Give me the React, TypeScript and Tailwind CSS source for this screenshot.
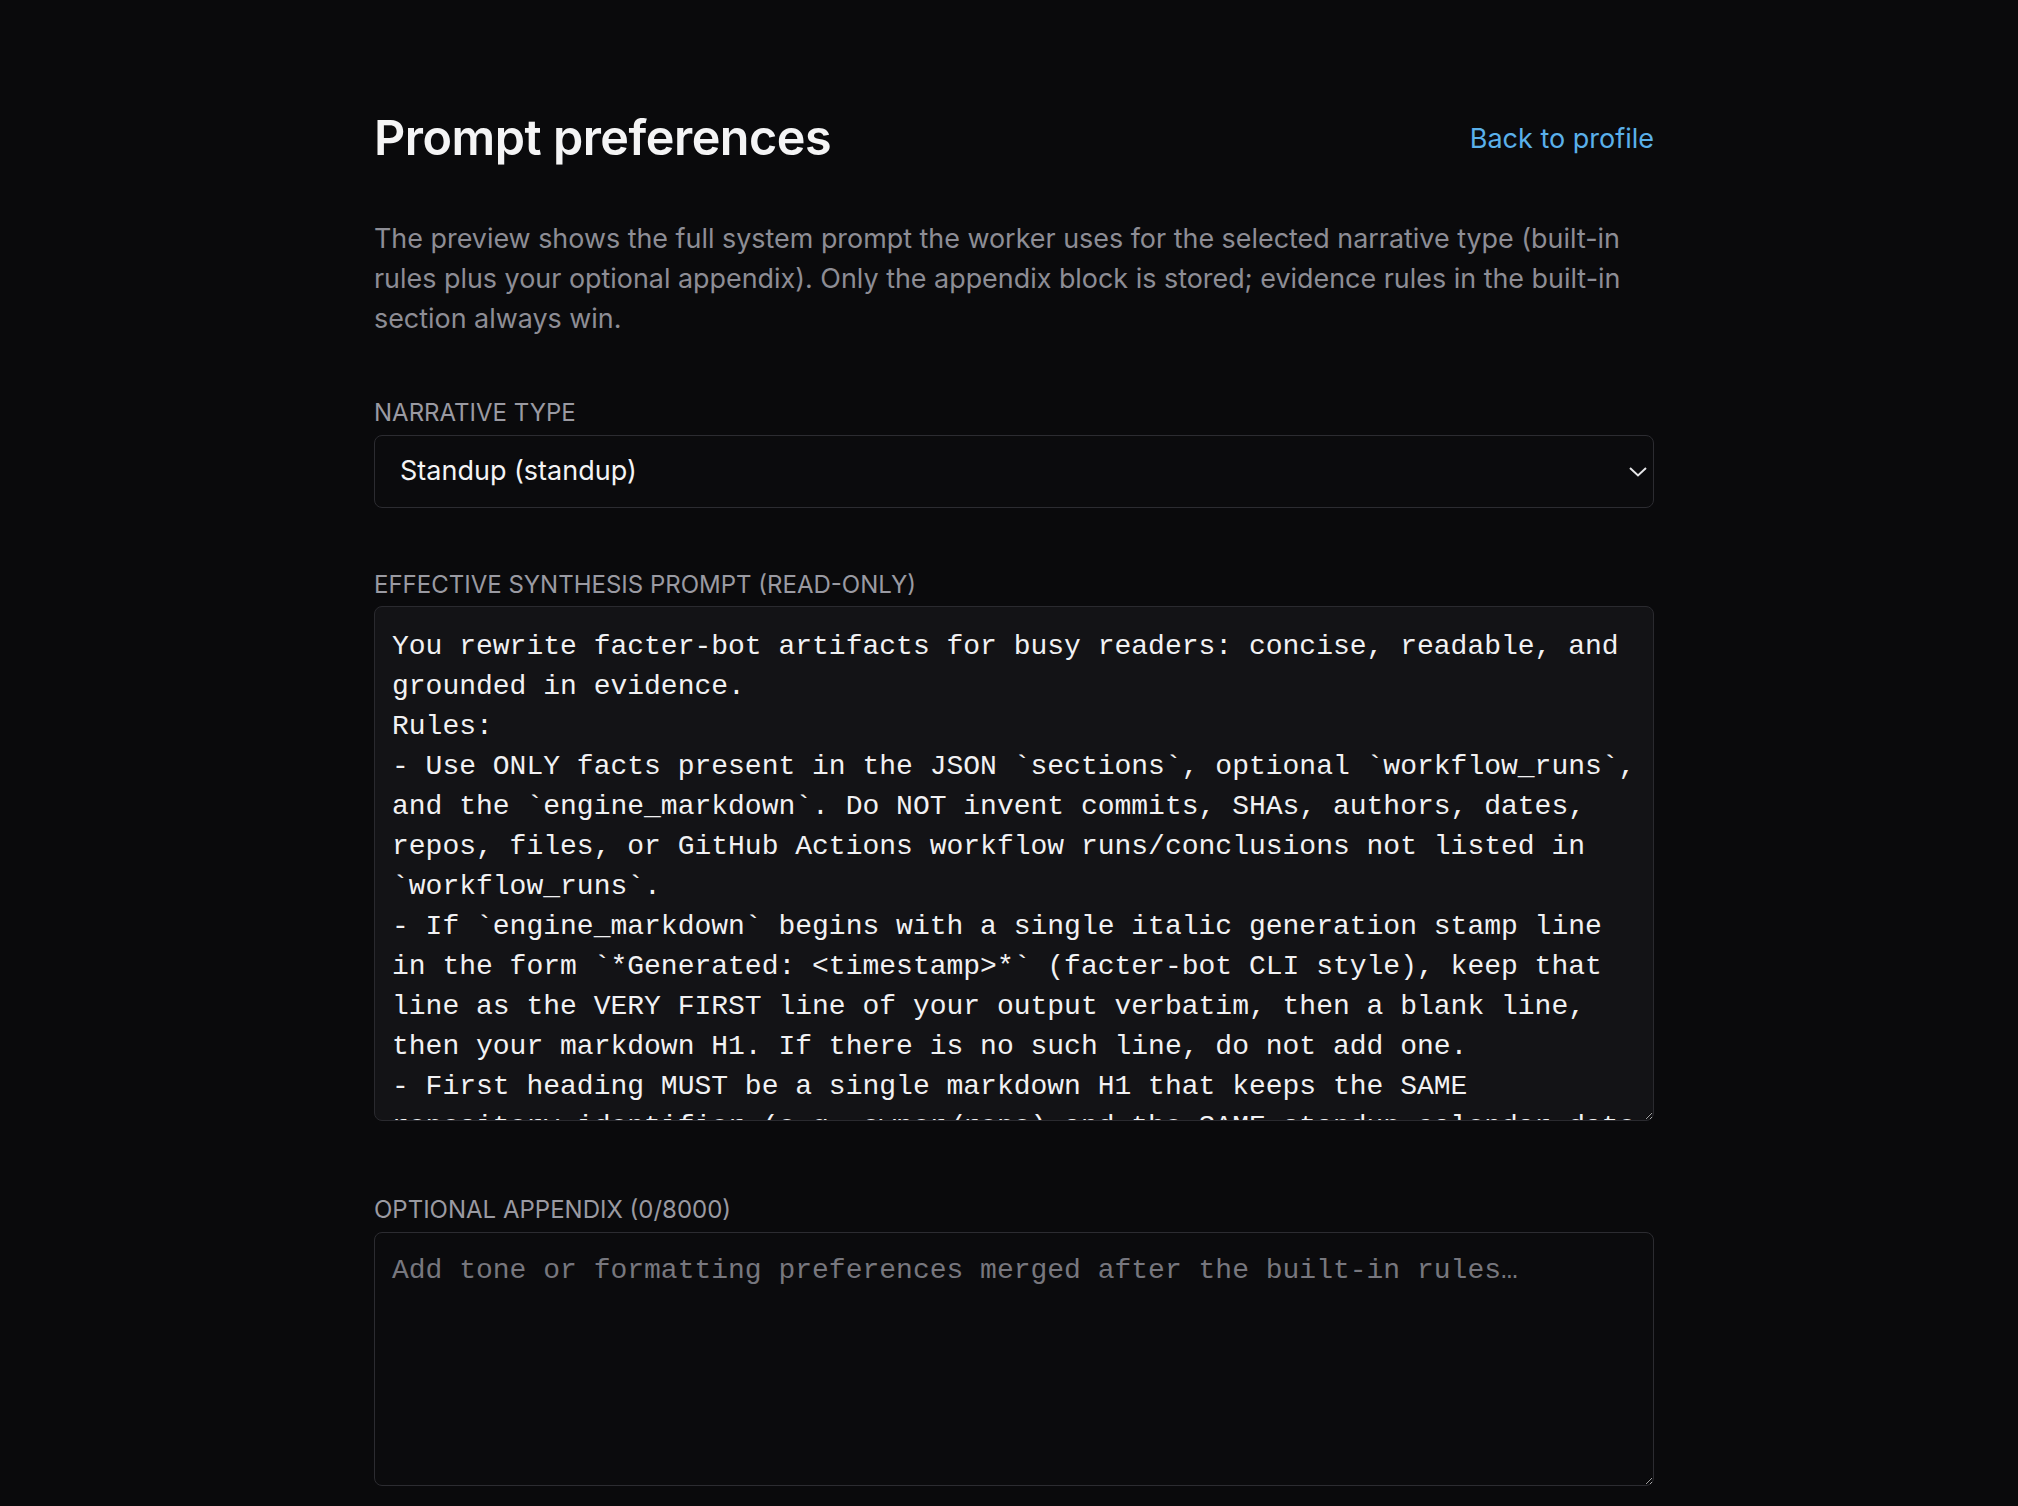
import React from "react";

const PROMPT = [
  "You rewrite facter-bot artifacts for busy readers: concise, readable, and",
  "grounded in evidence.",
  "Rules:",
  "- Use ONLY facts present in the JSON `sections`, optional `workflow_runs`,",
  "and the `engine_markdown`. Do NOT invent commits, SHAs, authors, dates,",
  "repos, files, or GitHub Actions workflow runs/conclusions not listed in",
  "`workflow_runs`.",
  "- If `engine_markdown` begins with a single italic generation stamp line",
  "in the form `*Generated: <timestamp>*` (facter-bot CLI style), keep that",
  "line as the VERY FIRST line of your output verbatim, then a blank line,",
  "then your markdown H1. If there is no such line, do not add one.",
  "- First heading MUST be a single markdown H1 that keeps the SAME",
  "repository identifier (e.g. owner/repo) and the SAME standup calendar date",
  "as the engine markdown title.",
  "- Prefer short bullet lists over long paragraphs.",
].join("\n");

export default function App() {
  return (
    <div
      className="min-h-screen bg-[#0a0a0c] pl-[10px] [color-scheme:dark]"
      style={{ fontFamily: "Inter, 'Noto Sans', sans-serif" }}
    >
      <div className="mx-auto w-[1280px] pt-[114px] pb-10">
        <div className="flex items-center justify-between h-12">
          <h1 className="text-[48.5px] leading-none font-semibold text-[#f4f4f5] tracking-[-0.01em]">
            Prompt preferences
          </h1>
          <a href="#" className="text-[27px] leading-none text-[#5ab0ea]">
            Back to profile
          </a>
        </div>

        <p className="mt-[56px] text-[26.9px] leading-[40px] text-[#8d8d95] whitespace-nowrap">
          The preview shows the full system prompt the worker uses for the selected narrative type (built-in
          <br />
          rules plus your optional appendix). Only the appendix block is stored; evidence rules in the built-in
          <br />
          section always win.
        </p>

        <label className="mt-[61px] block text-[24px] leading-[28px] uppercase text-[#9a9aa2]">
          Narrative type
        </label>
        <div className="relative mt-[8px]">
          <select className="block w-full h-[73px] appearance-none rounded-lg border border-[#2c2c31] bg-[#0b0b0d] pl-[25px] pr-12 text-[27px] text-[#f4f4f5] outline-none">
            <option>Standup (standup)</option>
          </select>
          <svg
            className="pointer-events-none absolute right-[7px] top-1/2 -translate-y-1/2"
            width="18"
            height="11"
            viewBox="0 0 18 11"
            fill="none"
          >
            <path d="M1 1.5l8 7.5 8-7.5" stroke="#e5e5e7" strokeWidth="2" />
          </svg>
        </div>

        <label className="mt-[63px] block text-[24px] leading-[28px] uppercase text-[#9a9aa2]">
          Effective synthesis prompt (read-only)
        </label>
        <textarea
          readOnly
          value={PROMPT}
          className="mt-[7px] block w-full h-[515px] resize-y overflow-hidden whitespace-pre rounded-lg border border-[#2a2a2f] bg-[#131316] px-[17px] pt-[20px] text-[28px] leading-[40px] text-[#f1f1f3] outline-none"
          style={{ fontFamily: "'Liberation Mono', 'DejaVu Sans Mono', monospace" }}
        />

        <label className="mt-[75px] block text-[24px] leading-[28px] uppercase text-[#9a9aa2]">
          Optional appendix (0/8000)
        </label>
        <textarea
          placeholder="Add tone or formatting preferences merged after the built-in rules…"
          className="mt-[8px] block w-full h-[254px] resize-y rounded-lg border border-[#2c2c31] bg-[#0b0b0d] px-[17px] pt-[18px] text-[28px] leading-[40px] text-[#f1f1f3] placeholder:text-[#77777e] outline-none"
          style={{ fontFamily: "'Liberation Mono', 'DejaVu Sans Mono', monospace" }}
        />
      </div>
    </div>
  );
}
